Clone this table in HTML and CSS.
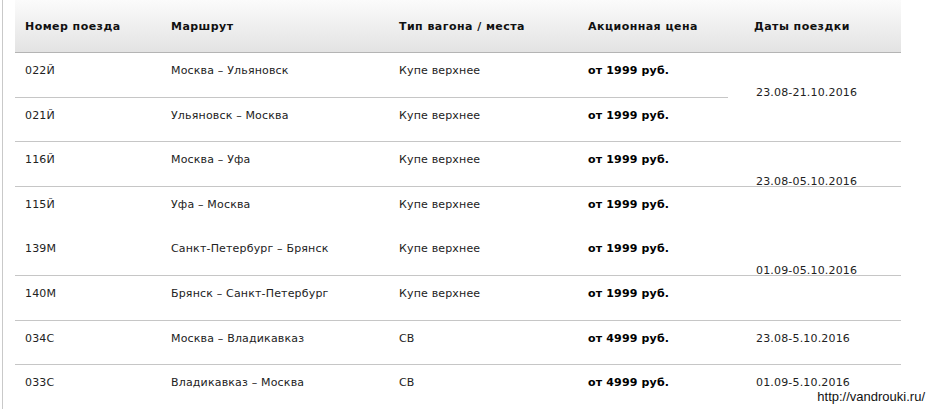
FILE: index.html
```html
<!DOCTYPE html>
<html lang="ru">
<head>
<meta charset="utf-8">
<title>Акционные цены</title>
<link rel="stylesheet" href="styles.css">
</head>
<body>
<div class="page">
  <table class="trains">
    <colgroup>
      <col class="c-num"><col class="c-route"><col class="c-type"><col class="c-price"><col class="c-date">
    </colgroup>
    <thead>
      <tr>
        <th>Номер поезда</th>
        <th>Маршрут</th>
        <th>Тип вагона / места</th>
        <th>Акционная цена</th>
        <th class="date">Даты поездки</th>
      </tr>
    </thead>
    <tbody>
      <tr class="first">
        <td>022Й</td>
        <td>Москва – Ульяновск</td>
        <td>Купе верхнее</td>
        <td class="price">от 1999 руб.</td>
        <td class="date mid" rowspan="2">23.08-21.10.2016</td>
      </tr>
      <tr class="short">
        <td>021Й</td>
        <td>Ульяновск – Москва</td>
        <td>Купе верхнее</td>
        <td class="price">от 1999 руб.</td>
      </tr>
      <tr>
        <td>116Й</td>
        <td>Москва – Уфа</td>
        <td>Купе верхнее</td>
        <td class="price">от 1999 руб.</td>
        <td class="date low">23.08-05.10.2016</td>
      </tr>
      <tr class="short">
        <td>115Й</td>
        <td>Уфа – Москва</td>
        <td>Купе верхнее</td>
        <td class="price">от 1999 руб.</td>
        <td class="date low" rowspan="2">01.09-05.10.2016</td>
      </tr>
      <tr class="open">
        <td>139М</td>
        <td>Санкт-Петербург – Брянск</td>
        <td>Купе верхнее</td>
        <td class="price">от 1999 руб.</td>
      </tr>
      <tr>
        <td>140М</td>
        <td>Брянск – Санкт-Петербург</td>
        <td>Купе верхнее</td>
        <td class="price">от 1999 руб.</td>
        <td class="date"></td>
      </tr>
      <tr class="short">
        <td>034С</td>
        <td>Москва – Владикавказ</td>
        <td>СВ</td>
        <td class="price">от 4999 руб.</td>
        <td class="date">23.08-5.10.2016</td>
      </tr>
      <tr>
        <td>033С</td>
        <td>Владикавказ – Москва</td>
        <td>СВ</td>
        <td class="price">от 4999 руб.</td>
        <td class="date">01.09-5.10.2016</td>
      </tr>
    </tbody>
  </table>
  <div class="watermark">http://vandrouki.ru/</div>
</div>
</body>
</html>
```

FILE: styles.css
```css
html, body {
  margin: 0;
  padding: 0;
  background: #fff;
}

.page {
  margin-left: 2px;
  border-left: 1px solid #c9c9c9;
  padding-left: 12px;
  min-height: 409px;
  box-sizing: border-box;
}

.trains {
  width: 886px;
  table-layout: fixed;
  border-collapse: separate;
  border-spacing: 0;
  font-family: "DejaVu Sans", Verdana, sans-serif;
  font-size: 11px;
  line-height: 13px;
  letter-spacing: 0.17px;
  color: #222;
}

.c-num { width: 146px; }
.c-route { width: 228px; }
.c-type { width: 189px; }
.c-price { width: 150px; }
.c-date { width: 173px; }

.trains th {
  height: 50px;
  padding: 1px 10px 1px;
  text-align: left;
  vertical-align: middle;
  font-weight: bold;
  letter-spacing: 0.45px;
  color: #111;
  background: linear-gradient(#fbfbfb, #e3e3e3);
  border-bottom: 1px solid #b4b4b4;
}

.trains th.date {
  padding-left: 26px;
}

.trains td {
  padding: 11px 10px 20px;
  height: 13px;
  vertical-align: top;
  text-align: left;
  border-top: 1px solid #c6c6c6;
  white-space: nowrap;
}

.trains tr.first td {
  border-top: 0;
  padding-bottom: 20px;
}

.trains tr.short td {
  padding-bottom: 19px;
}

.trains tr.open td {
  border-top: 1px solid transparent;
}

.trains td.date {
  padding-left: 28px;
}

.trains td.mid {
  vertical-align: middle;
  padding-top: 10px;
  padding-bottom: 20px;
}

.trains td.low {
  vertical-align: bottom;
  padding-top: 0;
  padding-bottom: 0;
  line-height: 8px;
}

.trains tr.short td.low {
  padding-bottom: 0;
}

.price {
  font-weight: bold;
  color: #000;
}

.watermark {
  position: absolute;
  right: 4px;
  top: 389px;
  font-family: "Liberation Sans", Arial, sans-serif;
  font-size: 13px;
  line-height: 15px;
  color: #111;
}
```
